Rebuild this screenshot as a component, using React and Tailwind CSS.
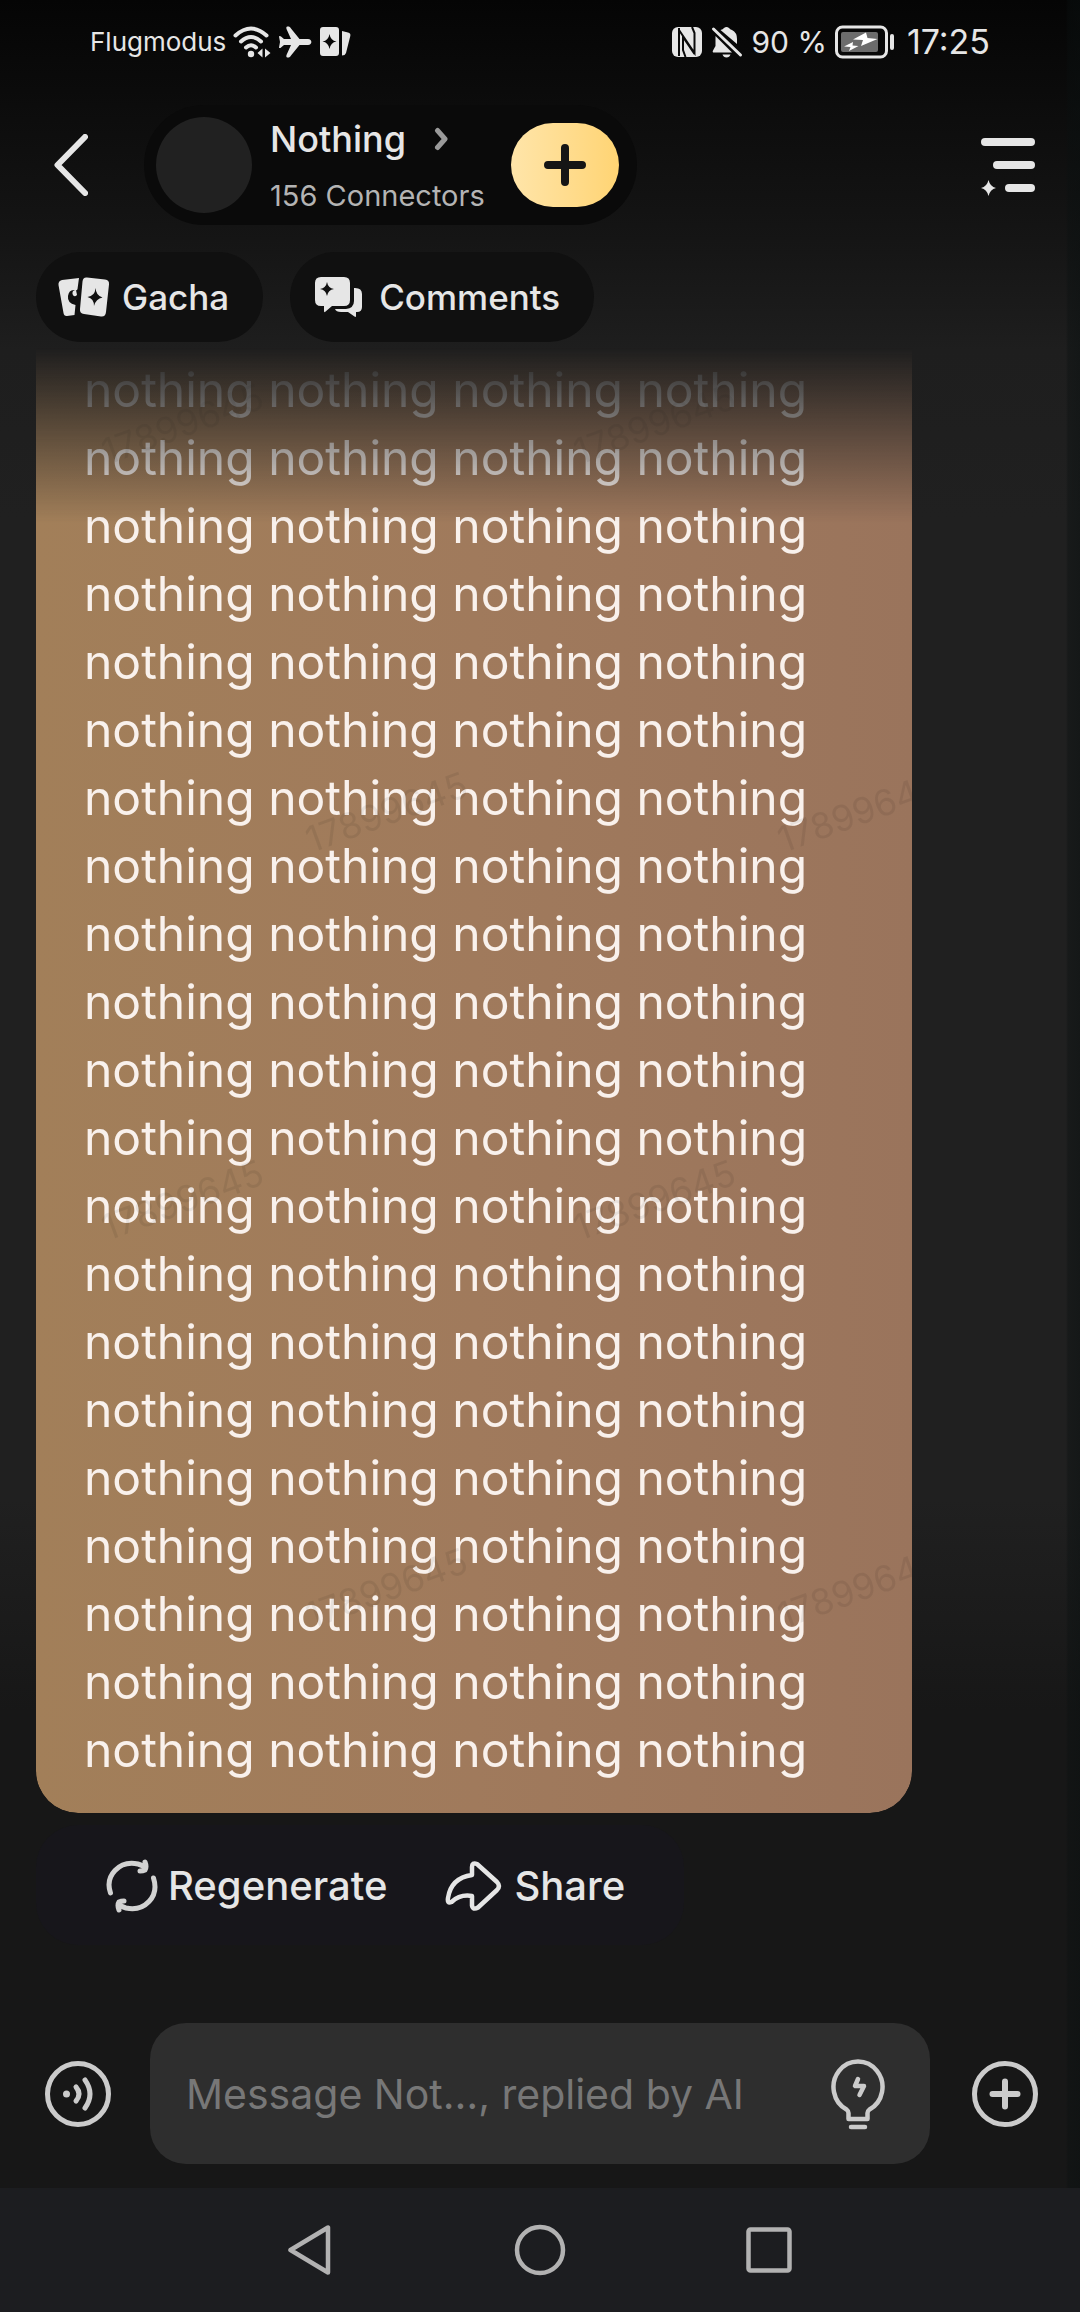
import React, { useState } from "react";

const WORDS_IN_REPLY = 84;

// the account id is tiled over the chat as a faint watermark
const watermarks = [
  { left: 62, top: 50 },
  { left: 534, top: 50 },
  { left: 266, top: 438 },
  { left: 738, top: 438 },
  { left: 62, top: 826 },
  { left: 534, top: 826 },
  { left: 266, top: 1214 },
  { left: 738, top: 1214 },
];

const StatusBar = () => (
  <div className="h-20 pt-[3px] px-[90px] flex items-center justify-between text-[#e6e6e6]">
    <div className="flex items-center gap-[7px]">
      <span className="text-[26px] leading-8">Flugmodus</span>

      {/* wifi */}
      <svg width="38" height="32" viewBox="0 0 38 32" fill="none" stroke="currentColor" strokeWidth="4" strokeLinecap="round">
        <path d="M2.500 9.500Q18 -4.500 33.500 9.500" />
        <path d="M8 15.500Q18 6.500 28 15.500" />
        <path d="M13 21.500Q18 17 23 21.500" />
        <circle cx="18" cy="28" r="3.200" fill="currentColor" stroke="none" />
        <path d="M29.500 22.500v9l-5-4.500zM32 22.500v9l5.500-4.500z" fill="currentColor" stroke="none" />
      </svg>

      {/* airplane */}
      <svg width="34" height="32" viewBox="0 0 34 32" fill="currentColor">
        <path d="M1 10.500c0-.8 1.500-.8 2 0l3 2.500h7L8.500 3C8 1 8.500.5 10 .5c1.500 0 2 .5 3 2l8.500 10.500H30c4.500 0 4.500 6 0 6h-8.500L13 29.500c-1 1.500-1.500 2-3 2s-2-.5-1.500-2.500L13 19H6l-3 2.500c-.5.8-2 .8-2 0L2 16z" />
      </svg>

      {/* cards */}
      <svg width="32" height="30" viewBox="0 0 32 30" fill="currentColor">
        <path fillRule="evenodd" d="M4 0h13q3 0 3 3v23q0 3-3 3H4q-3 0-3-3V3q0-3 3-3zM10.500 7q1 6.500 7 7.500q-6 1-7 7.500q-1-6.500-7-7.500q6-1 7-7.500z" />
        <path d="M23 4l6 1.500q3 .8 2.300 3.500L27 26q-.8 2.500-4 2.500z" />
      </svg>
    </div>

    <div className="flex items-center gap-2">
      {/* nfc */}
      <svg width="32" height="32" viewBox="0 0 32 32">
        <rect x="1" y="1" width="30" height="30" rx="6" fill="#e6e6e6" />
        <path d="M8 2v28M8 4L23.500 27V13M8 4L12 10v14l2.500 7M12 11L23.500 28M21 1l2.500 6v21" fill="none" stroke="#0a0a0a" strokeWidth="2" />
      </svg>

      {/* muted bell */}
      <svg width="32" height="32" viewBox="0 0 32 32" fill="currentColor">
        <path d="M4.500 10v10L2 24.500q-1 2 1 2h18z" />
        <path d="M9.500 4q2.500-.5 3.500-2q2.500-2 5 0q1 1.500 3 2q5 2.500 5 9v5z" />
        <path d="M11.500 28.500h8q-1 3-4 3t-4-3z" />
        <path d="M2.500 3l27 26" stroke="currentColor" strokeWidth="3" strokeLinecap="round" />
      </svg>
      <span className="text-[30px] leading-10">90 %</span>

      {/* battery */}
      <svg width="60" height="34" viewBox="0 0 60 34">
        <rect x="1.500" y="2" width="50" height="30" rx="6" fill="none" stroke="#e6e6e6" strokeWidth="3" />
        <rect x="6" y="7" width="37" height="20" rx="2" fill="#6c6c6c" />
        <rect x="55" y="9" width="4" height="16" rx="2" fill="#e6e6e6" />
        <path d="M31 7.500L18 14.500l10 .5l-2 6L42.500 14l-10-1zM18 17l-9 4.500 6.500.5-1.500 4 9.500-5-6-.5z" fill="#fff" />
      </svg>
      <span className="text-[34px] leading-10 ml-1">17:25</span>
    </div>
  </div>
);

const Header = () => (
  <header className="pl-[54px] pr-[45px] pt-[25px] flex items-center justify-between">
    <div className="flex items-center gap-14">
      <button type="button" aria-label="Back" className="text-[#e6e6e6]">
        <svg width="34" height="62" viewBox="0 0 34 62" fill="none" stroke="currentColor" strokeWidth="6" strokeLinecap="round" strokeLinejoin="round">
          <path d="M31 3L3.500 31l27.500 28" />
        </svg>
      </button>

      <div className="h-[120px] pl-3 pr-[18px] rounded-full bg-[#0a0a0a] flex items-center">
        <div className="size-24 rounded-full bg-[#212121]"></div>
        <div className="ml-[18px] w-[241px] flex flex-col gap-[17px]">
          <button type="button" className="flex items-center gap-7 text-[#e6e6e6]">
            <h1 className="text-[36px] leading-11 font-medium">Nothing</h1>
            <svg width="16" height="24" viewBox="0 0 16 24" fill="none" stroke="#9a9a9a" strokeWidth="5" strokeLinecap="round" strokeLinejoin="round">
              <path d="M3.500 3.500L11 12l-7.500 8.500" />
            </svg>
          </button>
          <p className="text-[29px] leading-9 whitespace-nowrap text-[#b4b4b4]">156 Connectors</p>
        </div>
        <button type="button" aria-label="Connect" className="w-27 h-21 rounded-full bg-linear-to-r from-[#ffe5a9] to-[#ffd473] flex items-center justify-center">
          <svg width="42" height="42" viewBox="0 0 42 42" stroke="#151515" strokeWidth="8" strokeLinecap="round">
            <path d="M21 4v34M4 21h34" />
          </svg>
        </button>
      </div>
    </div>

    <button type="button" aria-label="Menu" className="text-[#e6e6e6]">
      <svg width="54" height="62" viewBox="0 -3 54 62" fill="currentColor">
        <rect x="0" y="1" width="54" height="8" rx="4" />
        <rect x="12" y="24" width="42" height="8" rx="4" />
        <rect x="24" y="47" width="30" height="8" rx="4" />
        <path d="M7.500 43q1.500 6.500 7.500 8q-6 1.500-7.500 8q-1.500-6.500-7.500-8q6-1.500 7.500-8z" />
      </svg>
    </button>
  </header>
);

const Chips = () => (
  <div className="px-9 pt-[27px] flex gap-[27px] text-[35px] font-medium text-[#e6e6e6]">
    <button type="button" className="h-[90px] pl-[22px] pr-[34px] rounded-full bg-[#101010] flex items-center gap-3">
      <svg width="52" height="40" viewBox="0 0 52 40" fill="currentColor">
        <path d="M4 3L21 1L19.500 12Q19 14 17 13Q11 12 10 19T17.500 28L16.500 38L9 39q-3 .3-3.500-3L.5 8q-.5-4 3.500-5z" />
        <path d="M18 13q-4 0-3.500 4q1.500 4 4.500 1z" />
        <path fillRule="evenodd" d="M29 .5L47 2.500q4.500.5 4 5L48 35q-.5 5-5 4.500L26 37q-4.500-.5-4-5L24.500 4.500q.5-4.500 4.500-4zM37.500 11q-.5 8-8 9q6.500 1.500 6.500 9q2-7.500 8.500-8.500q-6.500-2-7-9.500z" />
      </svg>
      Gacha
    </button>

    <button type="button" className="h-[90px] pl-6 pr-[34px] rounded-full bg-[#101010] flex items-center gap-4">
      <svg width="49" height="40" viewBox="0 0 49 40" fill="currentColor">
        <path fillRule="evenodd" d="M7 0h23q6 0 6 6v17q0 6-6 6H18l-7 6q-1 .5-1-1v-5H7q-6 0-6-6V6q0-6 6-6zM13 5q-1 6-7 7q6 1 7 7q1-6 7-7q-6-1-7-7z" />
        <path d="M40 11q8-.5 8 6v13q0 5-5 5h-1v4q0 1.500-1.500.5L34 35h-7q-5 0-6-3h11q8-1 8-8z" />
      </svg>
      Comments
    </button>
  </div>
);

const Chat = () => (
  <main className="flex-1 px-9 pt-[6px]">
    <div className="relative w-[876px] max-w-full overflow-hidden rounded-b-[42px] bg-linear-to-r from-[#a27f59] via-[#a07a5c] to-[#9a745c] mask-[linear-gradient(to_bottom,transparent,#000_175px)]">
      <p className="px-12 pt-2 pb-[29px] text-[48px] leading-[68px] text-[#f9f1ec]">
        {Array(WORDS_IN_REPLY).fill("nothing").join(" ")}
      </p>
      {watermarks.map((mark, i) => (
        <span
          key={i}
          aria-hidden="true"
          className="absolute -rotate-20 text-[36px] leading-13 text-black/7"
          style={{ left: mark.left, top: mark.top }}
        >
          17899645
        </span>
      ))}
    </div>

    <div className="mt-3 w-[648px] max-w-full h-30 pt-[2px] px-[70px] rounded-[42px] bg-[#17161b] flex items-center gap-[58px] text-[40px] font-medium text-[#e6e6e6]">
      <button type="button" className="flex items-center gap-[10px]">
        <svg width="52" height="54" viewBox="0 0 52 54" fill="none" stroke="#d2d2d2" strokeWidth="5" strokeLinecap="round" strokeLinejoin="round">
          <path d="M4.500 34Q0 21 9 11.500T32 5q4 1 7 3.500" />
          <path d="M39 3q2 5 0 8q-2 1-5 1" />
          <path d="M47.500 19Q52 33 43 42.500T20 49q-4-1-7-3.500" />
          <path d="M13 51q-2-5 0-8q2-1 5-1" />
        </svg>
        Regenerate
      </button>
      <button type="button" className="flex items-center gap-3">
        <svg width="57" height="50" viewBox="0 0 57 50" fill="none" stroke="currentColor" strokeWidth="4.500" strokeLinecap="round" strokeLinejoin="round">
          <path d="M27 14V6q0-5 5-3L52 21q4 4 0 8L33 46.500q-5 3-6-2V35Q15 33 6.500 41Q2 43 3 37Q6 17 27 14z" />
        </svg>
        Share
      </button>
    </div>
  </main>
);

const Composer = () => {
  const [message, setMessage] = useState("");

  return (
    <form className="pl-[45px] pr-[42px] pb-6 flex items-center text-[#cbcbcb]" onSubmit={(e) => e.preventDefault()}>
      <button type="button" aria-label="Voice message">
        <svg width="66" height="68" viewBox="0 0 66 68" fill="none" stroke="currentColor" strokeWidth="5" strokeLinecap="round">
          <circle cx="33" cy="34" r="30.500" />
          <circle cx="21.500" cy="34" r="3.500" fill="currentColor" stroke="none" />
          <path d="M31 27q6 7 0 14M40 20q10 14 0 28" />
        </svg>
      </button>

      <div className="ml-[39px] mr-[42px] flex-1 h-[141px] pl-9 pr-[45px] rounded-[36px] bg-[#2e2e2e] flex items-center">
        <input
          type="text"
          aria-label="Message"
          value={message}
          onChange={(e) => setMessage(e.target.value)}
          placeholder="Message Not…, replied by AI"
          className="flex-1 min-w-0 text-[41px] leading-13 bg-transparent placeholder-[#777777] focus:outline-none"
        />
        <button type="button" aria-label="Suggestions">
          <svg width="54" height="72" viewBox="0 -1 54 72" fill="none" stroke="currentColor" strokeWidth="4.500" strokeLinecap="round" strokeLinejoin="round">
            <path d="M17.500 60V54q0-2-2-3.500A24.500 25.500 0 1 1 38.500 50.500q-2 1.500-2 3.500v6z" />
            <path d="M20 68h14" />
            <path d="M27 20l-3 7h9l-4.500 9" />
          </svg>
        </button>
      </div>

      <button type="button" aria-label="More">
        <svg width="66" height="68" viewBox="0 0 66 68" fill="none" stroke="currentColor" strokeWidth="5" strokeLinecap="round">
          <circle cx="33" cy="34" r="30.500" />
          <path d="M33 21.500v25M20.500 34h25" strokeWidth="6" />
        </svg>
      </button>
    </form>
  );
};

const NavBar = () => (
  <nav className="h-31 bg-[#1c1d20] flex items-center justify-center gap-[180px] text-[#b2b2b2]">
    <button type="button" aria-label="System back">
      <svg width="46" height="52" viewBox="0 0 46 52" fill="none" stroke="currentColor" strokeWidth="4.500" strokeLinejoin="round">
        <path d="M40 3.500v45L2.500 26z" />
      </svg>
    </button>
    <button type="button" aria-label="Home">
      <svg width="52" height="52" viewBox="0 0 52 52" fill="none" stroke="currentColor" strokeWidth="4.500">
        <circle cx="26" cy="26" r="23" />
      </svg>
    </button>
    <button type="button" aria-label="Recent apps">
      <svg width="46" height="52" viewBox="0 0 46 52" fill="none" stroke="currentColor" strokeWidth="4.500">
        <rect x="2.500" y="5.500" width="41" height="41" rx="2" />
      </svg>
    </button>
  </nav>
);

const App = () => {
  return (
    <div className="min-h-screen flex flex-col font-[Inter,sans-serif] bg-[linear-gradient(to_left,#0a101080,#0a101060_12px,transparent_14px),linear-gradient(to_bottom,#050505,#151515_240px,#1e1e1e_350px,#202020_520px,#202020_1500px,#171717_1710px)]">
      <StatusBar />
      <Header />
      <Chips />
      <Chat />
      <Composer />
      <NavBar />
    </div>
  );
};

export default App;
